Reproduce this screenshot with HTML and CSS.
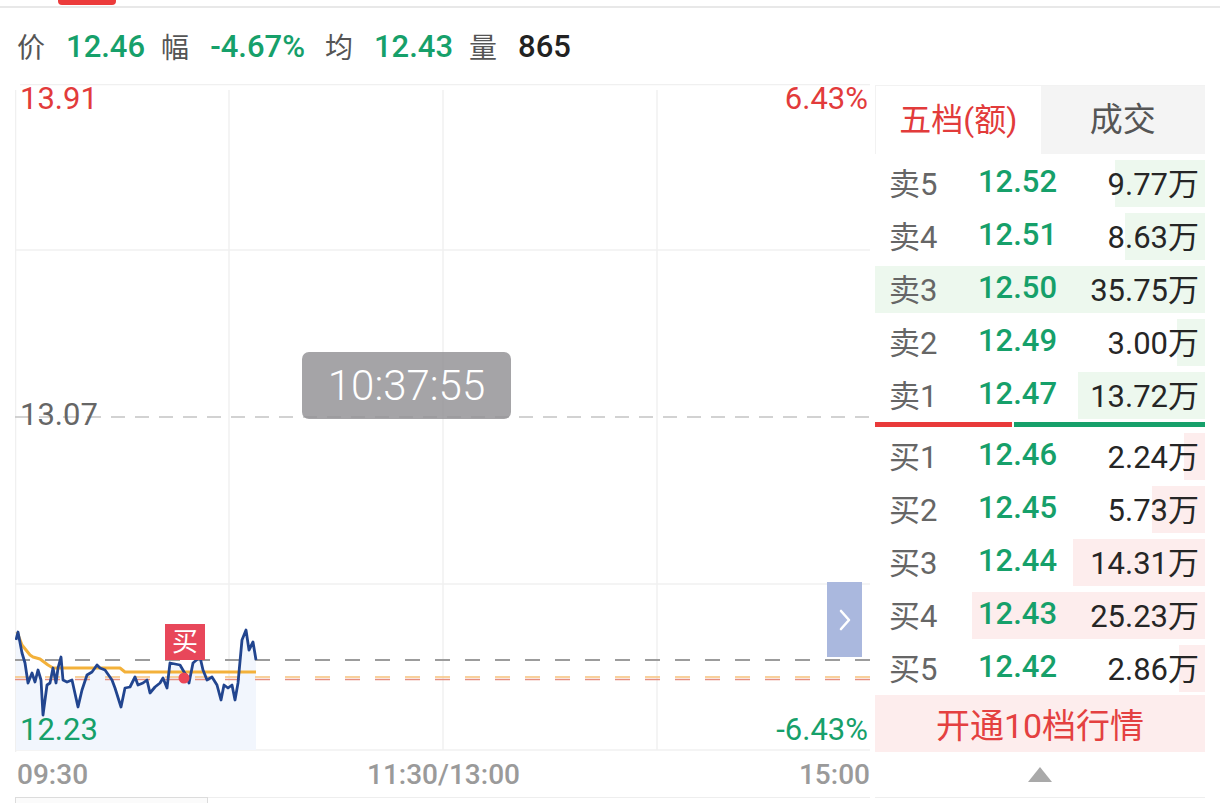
FILE: index.html
```html
<!DOCTYPE html>
<html lang="zh-CN">
<head>
    <meta charset="UTF-8">
    <meta name="viewport" content="width=device-width, initial-scale=1.0">
    <title>分时</title>
    <link rel="stylesheet" href="styles.css">
</head>
<body>
    <div class="topbar"><span class="mark"></span></div>

    <div class="quote">
        <span class="q-label">价</span><span class="q-val up">12.46</span>
        <span class="q-label">幅</span><span class="q-val up pct">-4.67%</span>
        <span class="q-label">均</span><span class="q-val up">12.43</span>
        <span class="q-label">量</span><span class="q-val plain">865</span>
    </div>

    <div class="main">
        <div class="chart-col">
            <div class="chart">
                <svg class="plot" width="855" height="668" viewBox="0 0 855 668">
                    <!-- grid -->
                    <g stroke="#f0f0f0" stroke-width="1.5" fill="none">
                        <line x1="5" y1="0.5" x2="855" y2="0.5"/>
                        <line x1="0.5" y1="6" x2="0.5" y2="668"/>
                        <line x1="214" y1="6" x2="214" y2="666"/>
                        <line x1="428" y1="6" x2="428" y2="666"/>
                        <line x1="642" y1="6" x2="642" y2="666"/>
                        <line x1="0" y1="166" x2="855" y2="166"/>
                        <line x1="0" y1="500" x2="855" y2="500"/>
                        <line x1="0" y1="666" x2="855" y2="666"/>
                    </g>
                    <line x1="0" y1="333" x2="855" y2="333" stroke="#c4c4c4" stroke-width="1.5" stroke-dasharray="14 10"/>

                    <!-- area under price -->
                    <path fill="#f2f6fd" d="M1,556 L3,548 L7,569 L10,579 L13,599 L17,589 L20,598 L23,586 L26,596 L28,631 L32,601 L35,599 L38,584 L41,599 L43,584 L46,573 L48,596 L52,598 L57,596 L63,623 L67,606 L72,591 L77,588 L82,581 L85,584 L90,586 L97,596 L100,604 L106,623 L110,604 L115,603 L120,593 L123,601 L128,599 L132,596 L135,609 L140,603 L145,599 L148,594 L152,604 L155,579 L165,581 L172,593 L174,599 L178,579 L185,573 L188,586 L192,596 L197,593 L202,601 L206,616 L209,601 L213,604 L217,601 L220,616 L223,599 L227,556 L231,546 L234,566 L238,558 L241,576 L241,666 L1,666 Z"/>

                    <!-- reference lines -->
                    <line x1="0" y1="576" x2="855" y2="576" stroke="#9c9c9c" stroke-width="2" stroke-dasharray="15 15"/>
                    <line x1="0" y1="593" x2="855" y2="593" stroke="#f6c27c" stroke-width="1.6" stroke-dasharray="15 15"/>
                    <line x1="0" y1="595.5" x2="855" y2="595.5" stroke="#e58f80" stroke-width="1.4" stroke-dasharray="15 15"/>

                    <!-- average -->
                    <polyline fill="none" stroke="#f3b13a" stroke-width="3" stroke-linejoin="round"
                        points="2,548 7,561 15,571 18,573 25,575 33,581 38,584 105,584 110,588 241,588"/>

                    <!-- price -->
                    <polyline fill="none" stroke="#22458f" stroke-width="2.8" stroke-linejoin="round"
                        points="1,556 3,548 7,569 10,579 13,599 17,589 20,598 23,586 26,596 28,631 32,601 35,599 38,584 41,599 43,584 46,573 48,596 52,598 57,596 63,623 67,606 72,591 77,588 82,581 85,584 90,586 97,596 100,604 106,623 110,604 115,603 120,593 123,601 128,599 132,596 135,609 140,603 145,599 148,594 152,604 155,579 165,581 172,593 174,599 178,579 185,573 188,586 192,596 197,593 202,601 206,616 209,601 213,604 217,601 220,616 223,599 227,556 231,546 234,566 238,558 241,576"/>

                    <circle cx="169" cy="594" r="5.5" fill="#ec4657"/>
                </svg>

                <span class="axis-lbl top left down-red">13.91</span>
                <span class="axis-lbl top right down-red">6.43%</span>
                <span class="axis-lbl mid left">13.07</span>
                <span class="axis-lbl bottom left up">12.23</span>
                <span class="axis-lbl bottom right up">-6.43%</span>

                <span class="buy-tag">买</span>
                <div class="crosshair-time">10:37:55</div>
                <div class="side-arrow">
                    <svg width="12" height="22" viewBox="0 0 12 22"><polyline points="2,2 10,11 2,20" fill="none" stroke="#fff" stroke-width="2.6" stroke-linecap="round" stroke-linejoin="round"/></svg>
                </div>
            </div>
            <div class="axis">
                <span>09:30</span><span>11:30/13:00</span><span>15:00</span>
            </div>
            <div class="vol"><span class="vol-tab"></span></div>
        </div>

        <div class="book">
            <div class="book-tabs">
                <div class="book-tab active">五档(额)</div>
                <div class="book-tab">成交</div>
            </div>

            <div class="rows sell">
                <div class="row"><i class="bar" style="width:90px"></i><span class="lv">卖5</span><span class="px">12.52</span><span class="amt">9.77万</span></div>
                <div class="row"><i class="bar" style="width:80px"></i><span class="lv">卖4</span><span class="px">12.51</span><span class="amt">8.63万</span></div>
                <div class="row"><i class="bar" style="width:330px"></i><span class="lv">卖3</span><span class="px">12.50</span><span class="amt">35.75万</span></div>
                <div class="row"><i class="bar" style="width:28px"></i><span class="lv">卖2</span><span class="px">12.49</span><span class="amt">3.00万</span></div>
                <div class="row"><i class="bar" style="width:127px"></i><span class="lv">卖1</span><span class="px">12.47</span><span class="amt">13.72万</span></div>
            </div>

            <div class="ratio"><span class="ratio-buy" style="width:41.5%"></span><span class="ratio-sell"></span></div>

            <div class="rows buy">
                <div class="row"><i class="bar" style="width:21px"></i><span class="lv">买1</span><span class="px">12.46</span><span class="amt">2.24万</span></div>
                <div class="row"><i class="bar" style="width:53px"></i><span class="lv">买2</span><span class="px">12.45</span><span class="amt">5.73万</span></div>
                <div class="row"><i class="bar" style="width:132px"></i><span class="lv">买3</span><span class="px">12.44</span><span class="amt">14.31万</span></div>
                <div class="row"><i class="bar" style="width:233px"></i><span class="lv">买4</span><span class="px">12.43</span><span class="amt">25.23万</span></div>
                <div class="row"><i class="bar" style="width:26px"></i><span class="lv">买5</span><span class="px">12.42</span><span class="amt">2.86万</span></div>
            </div>

            <div class="promo">开通10档行情</div>

            <div class="more">
                <svg width="24" height="15" viewBox="0 0 24 15"><polygon points="12,0 24,15 0,15" fill="#a9a9a9"/></svg>
            </div>

            <div class="next-row"><span class="px">12.47</span><span class="amt down-red">2</span></div>
        </div>
    </div>
</body>
</html>
```

FILE: styles.css
```css
body {
    margin: 0;
    font-family: Roboto, "Noto Sans CJK SC", sans-serif;
    background: #fff;
    width: 1220px;
    height: 803px;
    overflow: hidden;
}

.up {
    color: #16a06a;
}

.down-red {
    color: #e23b3b;
}

/* top strip */
.topbar {
    height: 6px;
    border-bottom: 2px solid #e8e8e8;
}

.topbar .mark {
    display: block;
    margin-left: 58px;
    width: 58px;
    height: 5px;
    background: #ec3b3b;
    border-radius: 0 0 4px 4px;
}

/* quote line */
.quote {
    height: 76px;
    display: flex;
    align-items: center;
    padding-left: 17px;
    font-size: 31px;
    font-weight: 500;
}

.q-label {
    font-size: 28px;
    font-weight: 400;
    color: #555;
    margin-right: 21px;
}

.q-val {
    margin-right: 16px;
}

.q-val.pct {
    margin-right: 20px;
}

.q-val.plain {
    color: #222;
}

/* layout */
.main {
    display: flex;
    gap: 5px;
    padding-left: 15px;
}

.chart-col {
    width: 855px;
}

.chart {
    position: relative;
    height: 668px;
}

.plot {
    display: block;
}

.axis-lbl {
    position: absolute;
    font-size: 31px;
    line-height: 30px;
}

.axis-lbl.left {
    left: 5px;
}

.axis-lbl.right {
    right: 2px;
}

.axis-lbl.top {
    top: 0;
}

.axis-lbl.mid {
    top: 316px;
    color: #666;
}

.axis-lbl.bottom {
    top: 631px;
}

.buy-tag {
    position: absolute;
    left: 150px;
    top: 540px;
    width: 40px;
    height: 36px;
    background: #e8475a;
    color: #fff;
    font-size: 26px;
    line-height: 36px;
    text-align: center;
}

.crosshair-time {
    position: absolute;
    left: 287px;
    top: 268px;
    width: 209px;
    height: 67px;
    border-radius: 7px;
    background: rgba(145, 144, 148, 0.82);
    color: #fff;
    font-size: 42px;
    font-weight: 300;
    line-height: 67px;
    text-align: center;
}

.side-arrow {
    position: absolute;
    left: 812px;
    top: 498px;
    width: 35px;
    height: 75px;
    background: #aab8de;
    display: flex;
    align-items: center;
    justify-content: center;
}

.axis {
    height: 45px;
    display: flex;
    justify-content: space-between;
    align-items: center;
    padding-left: 2px;
    font-size: 28px;
    font-weight: 500;
    color: #9a9a9a;
}

.vol {
    height: 10px;
    border-top: 1px solid #eeeeee;
}

.vol-tab {
    display: block;
    width: 191px;
    height: 10px;
    margin-top: -1px;
    border: 1px solid #dcdcdc;
    border-bottom: none;
    background: #fbfbfb;
}

/* order book */
.book {
    width: 330px;
    padding-top: 1px;
}

.book-tabs {
    display: flex;
    height: 69px;
    border-top: 1px solid #f2f2f2;
    border-left: 1px solid #f2f2f2;
    box-sizing: border-box;
}

.book-tab {
    flex: 1;
    display: flex;
    align-items: center;
    justify-content: center;
    padding-bottom: 6px;
    font-size: 33px;
    color: #555;
    background: #f4f4f4;
}

.book-tab.active {
    background: #fff;
    color: #e23b3b;
    font-size: 32px;
}

.rows.sell {
    margin-top: 3px;
}

.rows.buy {
    margin-top: 3px;
}

.row {
    position: relative;
    height: 53px;
    box-sizing: border-box;
    display: grid;
    grid-template-columns: 89px 1fr auto;
    align-items: center;
    padding: 0 6px 4px 14px;
    font-size: 31px;
    font-weight: 500;
}

.row .bar {
    position: absolute;
    right: 0;
    top: 3px;
    bottom: 3px;
}

.sell .bar {
    background: #edf8ee;
}

.buy .bar {
    background: #fdeded;
}

.row span {
    position: relative;
}

.lv {
    color: #666;
    font-weight: 400;
}

.px {
    color: #16a06a;
}

.amt {
    color: #262626;
    font-weight: 400;
    text-align: right;
}

.ratio {
    display: flex;
    gap: 2px;
    height: 5px;
}

.ratio-buy {
    background: #e93a3a;
}

.ratio-sell {
    flex: 1;
    background: #16a06a;
}

.promo {
    height: 57px;
    display: flex;
    align-items: center;
    justify-content: center;
    background: #fdeded;
    color: #e44040;
    font-size: 34px;
}

.more {
    height: 45px;
    display: flex;
    align-items: center;
    justify-content: center;
}

.next-row {
    border-top: 1px solid #eee;
    height: 40px;
    display: flex;
    justify-content: space-between;
    padding: 0 14px 0 140px;
    font-size: 30px;
    font-weight: 500;
    line-height: 48px;
}
```
